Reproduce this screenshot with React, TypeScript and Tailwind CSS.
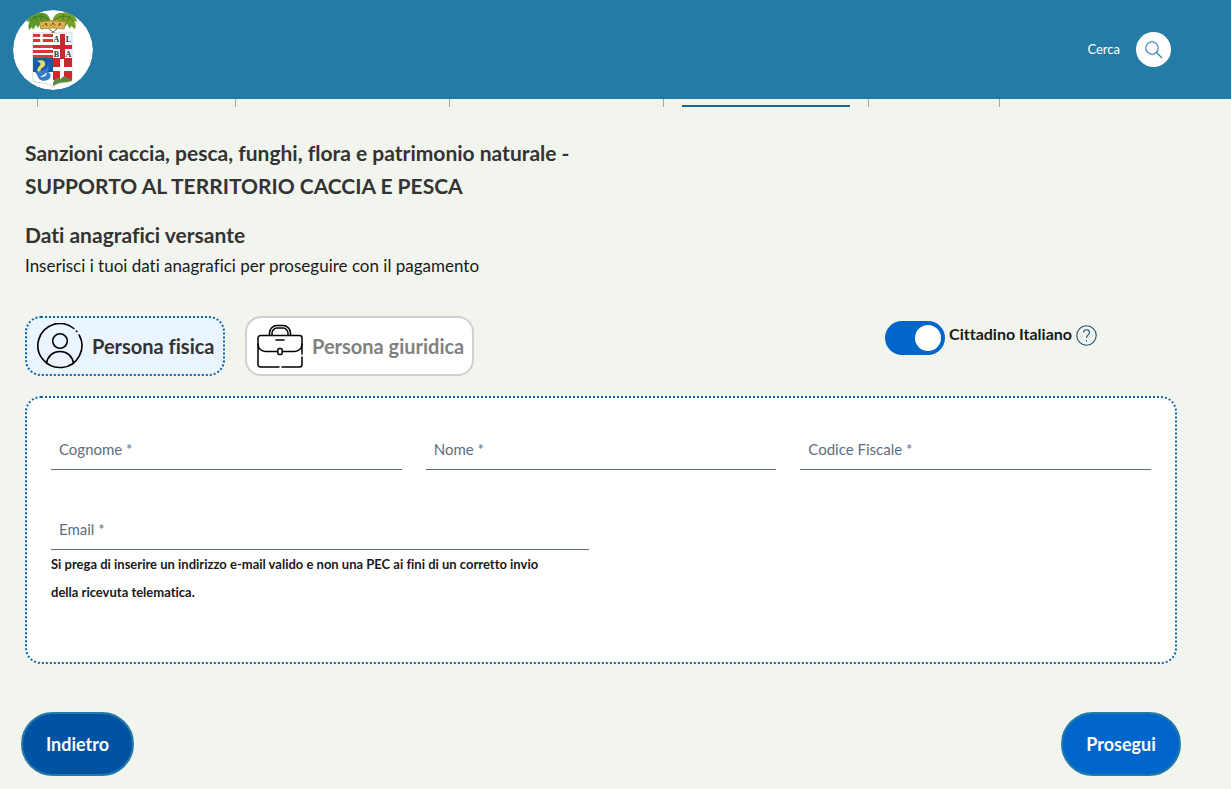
import { useState } from 'react';
import type { InputHTMLAttributes } from 'react';

type PersonType = 'fisica' | 'giuridica';

interface FieldProps extends InputHTMLAttributes<HTMLInputElement> {
  id: string;
  label: string;
}

const STEP_WIDTHS = ['w-[198px]', 'w-[214px]', 'w-[214px]', 'w-[205px]', 'w-[131px]', 'flex-1'];
const ACTIVE_STEP = 3;

function Crest() {
  return (
    <svg viewBox="0 0 80 80" className="size-20 shrink-0 overflow-hidden rounded-full" role="img" aria-label="Stemma">
      <circle cx="40" cy="40" r="40" fill="#fff" />
      {/* fronde */}
      <path d="M38 13C37 6 33 2 27 3c-3-2-7-1-9 2-3 1-4 4-4 7l3-1c-2 3-2 6-1 9l3-3 1 3 3-5 2 3 3-6 3 1 2-2 2 3Z" fill="#5b9a2c" />
      <path d="M39 13c1-7 5-11 11-10 3-2 7-1 9 2 3 1 5 4 5 7l-3-1c2 3 2 5 1 8l-4-3-1 3-3-5-2 3-3-6-3 1-2-2-2 3Z" fill="#77a024" />
      <path d="M17 12c4-7 12-8 19-2M61 12c-4-7-12-8-19-2M22 6l2 5M28 4v6M57 6l-3 5M50 4v6" fill="none" stroke="#386f24" strokeWidth=".8" />
      {/* corona */}
      <path d="M26 12q13-3 27 0l-2 7q-11-2-23 0Z" fill="#dbb552" stroke="#8d7233" strokeWidth=".7" />
      <path d="M29 16q10-2 21 0" fill="none" stroke="#92721c" strokeDasharray="2 2" />
      <path d="M32 14h2M39 13.500h2M46 14h2" stroke="#c7352c" strokeWidth="2" />
      <path d="m36 19 4 3 4-3M40 22l-3 2m3-2 3 2" fill="none" stroke="#65742b" />
      {/* scudo */}
      <path d="M20 23h39v48c-6 3-14 0-19.500 6C34 71 26 74 20 71Z" fill="#fff" stroke="#aaa" strokeWidth=".5" />
      <path d="M20 24h20v3H20Zm0 5h20v3H20Zm0 6h20v3H20Zm0 5h20v3H20Zm0 5h20v3H20Z" fill="#d33a39" />
      <path d="M28.500 23v10" stroke="#fff" strokeWidth="2.500" />
      <path d="M20 48h20v14H20Z" fill="#1d5aa6" />
      <path d="M24 51c5-2 9 0 8 4-1 3-6 3-4 7l3 3c-5 0-8-3-6-7 2-3 5-4-1-7Z" fill="#e6dc6c" />
      <path d="M34 53c3 5-3 7-6 8l-6 1 2 3 2 4c3 3 9 2 11-1 2-4-1-6-4-7 2 4-1 6-6 6 6-3 12-7 7-14Z" fill="#387ac4" />
      <path d="M47 24h5v11h7v4h-7v9h7v1H40v-1h7v-9h-7v-4h7Z" fill="#cf2530" />
      <path d="M40 49h19v21H40Z" fill="#cf2530" />
      <path d="M47 49h4v21h-4Zm-7 8h19v4H40Z" fill="#fff" />
      <path d="M40 74c1-6 5-7 8-5 2-4 6-3 7 0 2-1 3 0 4 2-7 2-12 0-19 5Z" fill="#5c883c" />
      <g fontFamily="Liberation Serif, serif" fontSize="8" fontWeight="bold" fill="#1c3c3c" textAnchor="middle">
        <text x="43.500" y="32">A</text>
        <text x="55.500" y="32">L</text>
        <text x="43.500" y="47">B</text>
        <text x="55.500" y="47">A</text>
      </g>
    </svg>
  );
}

function PersonIcon() {
  return (
    <svg viewBox="0 0 46 46" className="size-[46px] shrink-0" fill="none" stroke="#000" strokeWidth="1.6" strokeLinecap="round" aria-hidden="true">
      <path d="M36.8 5.5A22 22 0 1 0 42.2 12M39.4 8l.4.4" />
      <circle cx="23" cy="18" r="7.3" />
      <path d="M9.5 40C10.8 33 16 28.500 23 28.500S35.200 33 36.500 40" />
    </svg>
  );
}

function BriefcaseIcon() {
  return (
    <svg viewBox="0 0 46 46" className="size-[46px] shrink-0" fill="none" stroke="#000" strokeWidth="1.5" strokeLinecap="round" aria-hidden="true">
      <path d="M22 44H3.500A2.500 2.500 0 0 1 1 41.500V15a2.500 2.500 0 0 1 2.500-2.500h39A2.500 2.500 0 0 1 45 15v16m0 3v7.500a2.500 2.500 0 0 1-2.500 2.500H25" />
      <path d="M1 21c0 4 3 7.500 7.500 7.500H20m6 0h11.500C42 28.500 45 25 45 21" />
      <rect x="20.800" y="25.500" width="4.400" height="6" rx="1.500" />
      <path d="M12.500 12V10a7.500 7.500 0 0 1 7.500-7.500h6a7.500 7.500 0 0 1 7.500 7.500v2M15 12v-1.500A5 5 0 0 1 20 5h6a5 5 0 0 1 5 5.500V12M19 17h8" />
    </svg>
  );
}

function Field({ id, label, ...inputProps }: FieldProps) {
  return (
    <div className="relative">
      <input
        id={id}
        required
        placeholder=" "
        className="peer block h-10 w-full border-b border-[#5c6f82] bg-transparent px-2 text-base outline-none"
        {...inputProps}
      />
      <label
        htmlFor={id}
        className="pointer-events-none absolute top-2 left-2 text-[15px] leading-[22px] text-[#5c6f82] peer-focus:-top-4 peer-focus:text-xs peer-[:not(:placeholder-shown)]:-top-4 peer-[:not(:placeholder-shown)]:text-xs"
      >
        {label}
      </label>
    </div>
  );
}

export default function App() {
  const [personType, setPersonType] = useState<PersonType>('fisica');
  const [isItalian, setIsItalian] = useState(true);

  const active = 'border-dotted border-[#0b64a8] bg-[#ebf5ff] text-[#333]';
  const inactive = 'border-solid border-[#d0d0d0] bg-white text-[#808080]';

  return (
    <div className="min-h-screen bg-[#f2f5ed] font-['Lato','Noto_Sans',sans-serif] text-[#19191a] [font-variant-ligatures:none]">
      <header className="flex h-[99px] items-center justify-between bg-[#247ba6] pr-[60px] pl-[13px]">
        <a href="#" aria-label="Home">
          <Crest />
        </a>
        <div className="flex items-center gap-4">
          <span className="text-[13px] text-white">Cerca</span>
          <button type="button" aria-label="Cerca" className="flex size-[35px] items-center justify-center rounded-full bg-white">
            <svg viewBox="0 0 18 18" className="size-[18px]" fill="none" stroke="#247ba6" strokeWidth="1.1" aria-hidden="true">
              <circle cx="7" cy="7" r="6.200" />
              <path d="m11.500 11.500 5.500 5.500" />
            </svg>
          </button>
        </div>
      </header>

      <div className="flex h-2 pl-[37px]">
        {STEP_WIDTHS.map((width, index) => (
          <div key={index} className={`flex items-end border-l border-[#a3a6a5] px-[18px] ${width}`}>
            {index === ACTIVE_STEP && <span className="h-[2px] w-full bg-[#17699b]" />}
          </div>
        ))}
      </div>

      <main className="pr-[54px] pl-[25px]">
        <h1 className="max-w-[600px] pt-[29px] text-[21px] leading-[33px] font-bold text-[#333]">
          Sanzioni caccia, pesca, funghi, flora e patrimonio naturale - SUPPORTO AL TERRITORIO CACCIA E PESCA
        </h1>
        <h2 className="mt-4 text-[21px] leading-[33px] font-bold text-[#333]">Dati anagrafici versante</h2>
        <p className="text-[17px] leading-[30px]">Inserisci i tuoi dati anagrafici per proseguire con il pagamento</p>

        <div className="mt-[35px] flex items-start justify-between pr-20">
          <div className="flex gap-5">
            <button
              type="button"
              aria-pressed={personType === 'fisica'}
              onClick={() => setPersonType('fisica')}
              className={`flex h-[60px] w-[200px] items-center gap-[9px] rounded-2xl border-2 pl-[10px] text-[20px] font-bold whitespace-nowrap ${personType === 'fisica' ? active : inactive}`}
            >
              <PersonIcon />
              Persona fisica
            </button>
            <button
              type="button"
              aria-pressed={personType === 'giuridica'}
              onClick={() => setPersonType('giuridica')}
              className={`flex h-[60px] w-[229px] items-center gap-[9px] rounded-2xl border-2 pl-[10px] text-[20px] font-bold whitespace-nowrap ${personType === 'giuridica' ? active : inactive}`}
            >
              <BriefcaseIcon />
              Persona giuridica
            </button>
          </div>

          <div className="flex items-start gap-1 pt-[5px]">
            <input
              id="cittadino"
              type="checkbox"
              role="switch"
              checked={isItalian}
              onChange={(e) => setIsItalian(e.target.checked)}
              className="flex h-[34px] w-[60px] appearance-none items-center rounded-full bg-[#999] px-1 before:size-[26px] before:rounded-full before:bg-white checked:justify-end checked:bg-[#0066cc]"
            />
            <label htmlFor="cittadino" className="text-base leading-[26px] font-bold">
              Cittadino Italiano
            </label>
            <button type="button" aria-label="Aiuto" className="pt-1">
              <svg viewBox="0 0 21 21" className="size-[21px]" fill="none" stroke="#1d5578" strokeWidth="1.1" aria-hidden="true">
                <circle cx="10.500" cy="10.500" r="9.700" />
                <path d="M7.500 7.600C7.500 5.700 8.600 4.700 10.500 4.700s3 1.100 3 2.700c0 2.400-3 2.700-3 5.600M10.500 14.900v1.500" />
              </svg>
            </button>
          </div>
        </div>

        <form id="versante" className="mt-5 rounded-2xl border-2 border-dotted border-[#0b64a8] bg-white px-6 pt-8 pb-14">
          <div className="grid grid-cols-3 gap-6">
            <Field id="cognome" label="Cognome *" autoComplete="family-name" />
            <Field id="nome" label="Nome *" autoComplete="given-name" />
            <Field id="codice-fiscale" label="Codice Fiscale *" />
          </div>
          <div className="mt-10 grid grid-cols-2 gap-6">
            <div>
              <Field id="email" label="Email *" type="email" aria-describedby="email-help" />
              <p id="email-help" className="pr-6 text-[13px] leading-7 font-bold">
                Si prega di inserire un indirizzo e-mail valido e non una PEC ai fini di un corretto invio della ricevuta telematica.
              </p>
            </div>
          </div>
        </form>
      </main>

      <div className="mt-12 flex justify-between pr-[50px] pb-[13px] pl-[21px]">
        <button type="button" className="h-16 w-[113px] rounded-[32px] border-2 border-[#247ba6] bg-[#0052a3] text-[18px] font-bold text-white">
          Indietro
        </button>
        <button type="submit" form="versante" className="h-16 w-[120px] rounded-[32px] border-2 border-[#247ba6] bg-[#0066cc] text-[18px] font-bold text-white">
          Prosegui
        </button>
      </div>
    </div>
  );
}
